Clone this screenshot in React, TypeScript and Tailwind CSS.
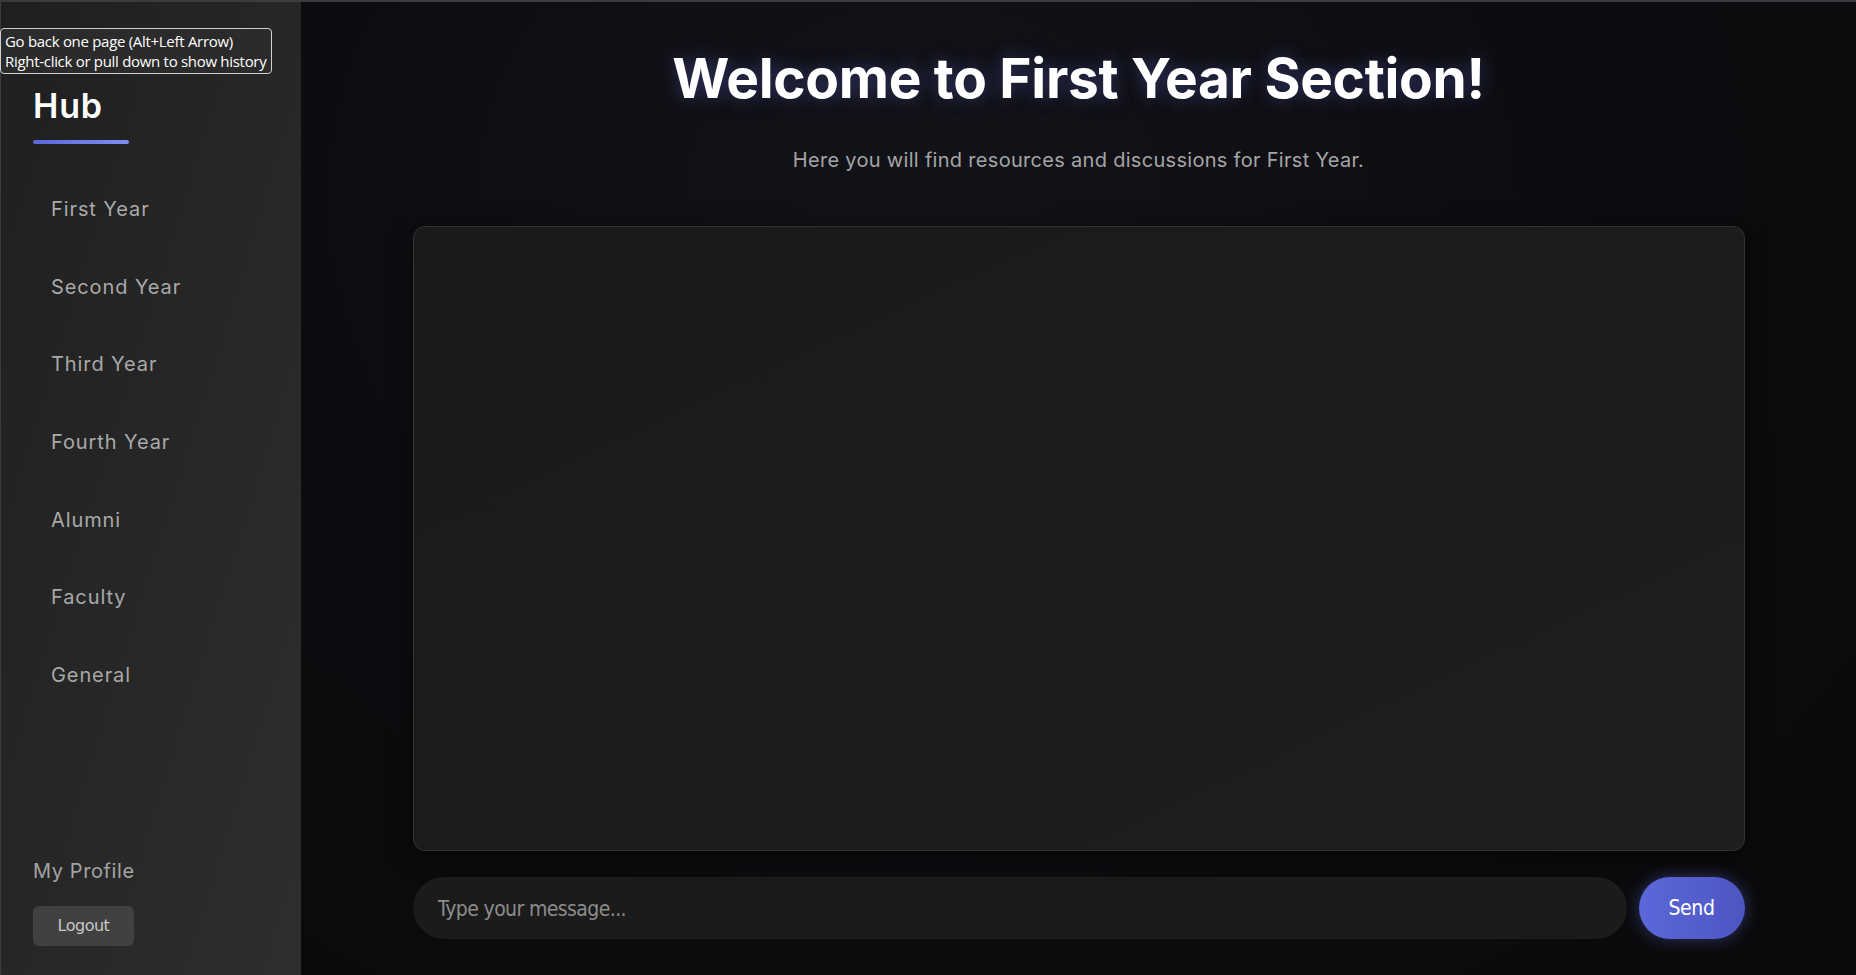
import { useState } from 'react';

const years = ['First Year', 'Second Year', 'Third Year', 'Fourth Year', 'Alumni', 'Faculty', 'General'];

function Sidebar() {
  return (
    <aside className="w-[301px] shrink-0 h-full flex flex-col border-l border-[#3a3a44] bg-gradient-to-br from-[#1f1f1f] to-[#2e2e2e] font-['Inter',sans-serif]">
      {/* Brand */}
      <div className="pl-[32px] pt-[85px]">
        <h1 className="text-[34px] leading-[38px] font-semibold text-white tracking-[0.8px]">Hub</h1>
        <div className="mt-[15px] h-[4px] w-[96px] rounded-full bg-gradient-to-r from-[#5a67d8] to-[#7f8ff4]" />
      </div>

      {/* Year links */}
      <nav className="mt-[26px] flex flex-col">
        {years.map((y) => (
          <a
            key={y}
            href="#"
            className="h-[77.7px] flex items-center pl-[50px] text-[20px] text-[#a9a9a9] tracking-[0.9px] hover:text-white"
          >
            {y}
          </a>
        ))}
      </nav>

      {/* Profile */}
      <div className="mt-auto pl-[32px] pb-[29px]">
        <a href="#" className="block text-[20px] leading-[28px] text-[#a3a3a3] tracking-[0.6px]">My Profile</a>
        <button className="mt-[21px] w-[101px] h-[40px] rounded-[6px] bg-[#414141] text-[16px] text-[#c8c8c8] font-['DejaVu_Sans',sans-serif] tracking-[-0.5px]">
          Logout
        </button>
      </div>
    </aside>
  );
}

export default function App() {
  const [msg, setMsg] = useState('');

  return (
    <div className="relative h-[975px] w-full overflow-hidden flex border-t-2 border-[#3b3b40] bg-[#0b0b0c]">
      <Sidebar />

      <main className="relative flex-1 h-full flex flex-col items-center bg-[radial-gradient(ellipse_at_40%_20%,#121219_0%,#0d0d11_45%,#0a0a0b_100%)] font-['Inter',sans-serif]">
        <h2 className="mt-[44px] text-[55px] leading-[64px] font-bold text-white tracking-[-0.3px] [text-shadow:0_0_18px_rgba(120,130,255,0.35)]">
          Welcome to First Year Section!
        </h2>
        <p className="mt-[36px] text-[20px] leading-[28px] text-[#a5a5a5] tracking-[0.3px]">
          Here you will find resources and discussions for First Year.
        </p>

        {/* Messages */}
        <div className="mt-[52px] w-[1332px] h-[625px] rounded-[12px] border border-[#333335] bg-gradient-to-br from-[#1a1a1a] to-[#1d1e1e] shadow-[0_4px_24px_rgba(0,0,0,0.5)]" />

        {/* Composer */}
        <div className="mt-[26px] w-[1332px] flex gap-[12px]">
          <input
            value={msg}
            onChange={(e) => setMsg(e.target.value)}
            placeholder="Type your message..."
            className="flex-1 h-[62px] rounded-full bg-[#1b1b1b] px-[25px] pt-[2px] text-[21px] text-[#ddd] placeholder:text-[#8c8c8c] outline-none font-['DejaVu_Sans_Condensed','DejaVu_Sans',sans-serif] tracking-[-0.6px]"
          />
          <button className="w-[106px] h-[62px] rounded-full pt-[2px] bg-gradient-to-r from-[#5b68d9] to-[#4d55c2] text-white text-[21px] font-['DejaVu_Sans_Condensed','DejaVu_Sans',sans-serif] tracking-[-0.4px] shadow-[0_0_16px_rgba(90,103,216,0.45)]">
            Send
          </button>
        </div>
      </main>

      {/* browser back-button tooltip */}
      <div className="absolute left-0 top-[26px] w-[272px] h-[46px] rounded-[4px] border border-[#d0d0d0] bg-[#2b2b2b] px-[4px] pt-[2px] text-[15px] leading-[20px] text-white font-['Open_Sans',sans-serif] tracking-[-0.3px]">
        <div>Go back one page (Alt+Left Arrow)</div>
        <div>Right-click or pull down to show history</div>
      </div>
    </div>
  );
}
